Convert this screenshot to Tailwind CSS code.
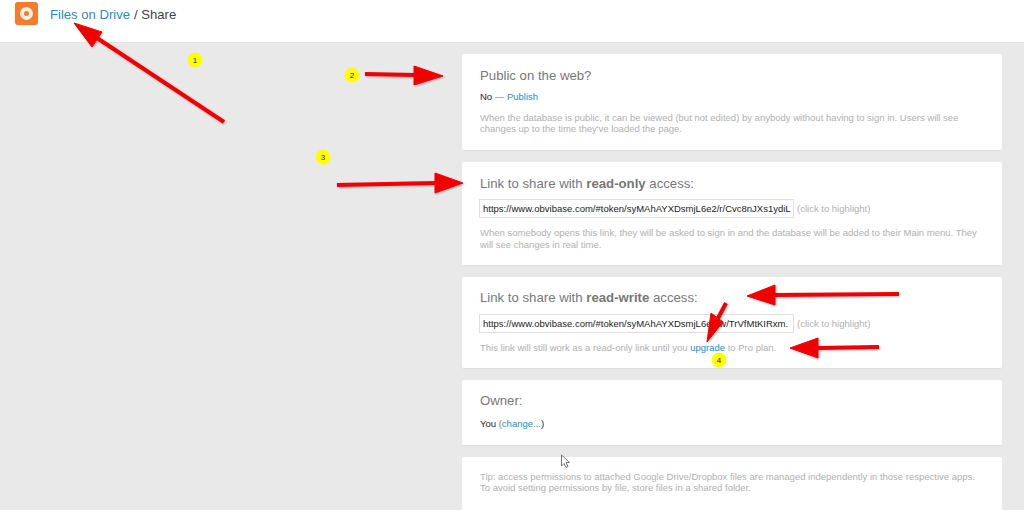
<!DOCTYPE html>
<html lang="en">

<head>
  <meta charset="UTF-8">
  <meta name="viewport" content="width=device-width, initial-scale=1.0">
  <title>Share</title>
  <script src="https://cdn.jsdelivr.net/npm/@tailwindcss/browser@4"></script>
</head>

<body class="bg-[#e9e9e9] font-['Liberation_Sans',Arial,sans-serif] text-[9.5px] leading-[11.5px] text-[#222]">
  <div class="relative h-[510px] w-[1024px] overflow-hidden">
    <!-- Header -->
    <header class="flex h-[43px] items-start border-b border-[#e2e2e2] bg-white pl-[15px] pt-[2px] text-[13.1px]">
      <div class="flex h-[23px] w-[23px] items-center justify-center rounded-[3px] bg-[#f47b2b]">
        <div class="h-[13px] w-[13px] rounded-full border-[4px] border-[#fdeee3]"></div>
      </div>
      <a class="ml-[12px] mt-[7px] text-[#2a8bc0]">Files on Drive</a>
      <span class="ml-[4px] mt-[7px] text-[#444]">/ Share</span>
    </header>

    <!-- Cards -->
    <main class="ml-[462px] mt-[11px] flex w-[540px] flex-col gap-[11px]">
      <section class="h-[97px] rounded-[2px] border-b border-[#ddd] bg-white px-[18px] pt-[14px]">
        <h2 class="text-[13.2px] leading-[16px] text-[#777]">Public on the web?</h2>
        <p class="mt-[7px]">No <span class="text-[#777]">—</span> <a class="text-[#2a8bc0]">Publish</a></p>
        <p class="mt-[9px] leading-[11px] text-[#b0b0b0]">When the database is public, it can be viewed (but not edited) by anybody without having to sign in. Users will see changes up to the time they've loaded the page.</p>
      </section>

      <section class="h-[104px] rounded-[2px] border-b border-[#ddd] bg-white px-[18px] pt-[14px]">
        <h2 class="text-[13.2px] leading-[16px] text-[#777]">Link to share with <b>read-only</b> access:</h2>
        <div class="mt-[7px] flex items-center">
          <div class="-ml-[1px] h-[19px] w-[315px] overflow-hidden whitespace-nowrap border border-[#e0e0e0] px-[3px] leading-[17px]">https://www.obvibase.com/#token/syMAhAYXDsmjL6e2/r/Cvc8nJXs1ydiL</div>
          <span class="ml-[3px] text-[#b0b0b0]">(click to highlight)</span>
        </div>
        <p class="mt-[9px] text-[#b0b0b0]">When somebody opens this link, they will be asked to sign in and the database will be added to their Main menu. They will see changes in real time.</p>
      </section>

      <section class="h-[92px] rounded-[2px] border-b border-[#ddd] bg-white px-[18px] pt-[13px]">
        <h2 class="text-[13.2px] leading-[16px] text-[#777]">Link to share with <b>read-write</b> access:</h2>
        <div class="mt-[8px] flex items-center">
          <div class="-ml-[1px] h-[19px] w-[315px] overflow-hidden whitespace-nowrap border border-[#e0e0e0] px-[3px] leading-[17px]">https://www.obvibase.com/#token/syMAhAYXDsmjL6e2/w/TrVfMtKIRxm.</div>
          <span class="ml-[3px] text-[#b0b0b0]">(click to highlight)</span>
        </div>
        <p class="mt-[9px] text-[#b0b0b0]">This link will still work as a read-only link until you <a class="text-[#2a8bc0]">upgrade</a> to Pro plan.</p>
      </section>

      <section class="h-[66px] rounded-[2px] border-b border-[#ddd] bg-white px-[18px] pt-[13px]">
        <h2 class="text-[13.2px] leading-[16px] text-[#777]">Owner:</h2>
        <p class="mt-[9px]">You <span class="text-[#777]">(</span><a class="text-[#2a8bc0]">change...</a>)</p>
      </section>

      <section class="h-[54px] rounded-[2px] border-b border-[#ddd] bg-white px-[18px] pt-[14px] leading-[11px] text-[#b0b0b0]">
        <p>Tip: access permissions to attached Google Drive/Dropbox files are managed independently in those respective apps.<br>To avoid setting permissions by file, store files in a shared folder.</p>
      </section>
    </main>

    <!-- Annotations drawn over the screenshot -->
    <svg class="absolute left-0 top-0" width="1024" height="510" viewBox="0 0 1024 510">
      <g class="drop-shadow-[1px_1px_1px_rgba(0,0,0,0.25)]" fill="#f00000" stroke="#f00000" stroke-linejoin="round">
        <path d="M224 122 L97 38" stroke-width="4" fill="none" />
        <path d="M74 23 L102 32 L92 47 Z" />
        <path d="M365 74 L415 75" stroke-width="4" fill="none" />
        <path d="M443 76 L414 66 L414 85 Z" />
        <path d="M337 185 L436 183" stroke-width="4" fill="none" />
        <path d="M463 183 L435 173 L435 193 Z" />
        <path d="M899 294 L775 295" stroke-width="4" fill="none" />
        <path d="M747 296 L775 285 L775 305 Z" />
        <path d="M879 347 L818 348" stroke-width="4" fill="none" />
        <path d="M790 348 L818 338 L818 358 Z" />
        <path d="M726 303 L716 322" stroke-width="4" fill="none" />
        <path d="M707 342 L711 313 L723 322 Z" />
      </g>
      <g fill="#ffff00">
        <circle cx="195" cy="60" r="7.5" />
        <circle cx="352" cy="75" r="7.5" />
        <circle cx="323" cy="157" r="7.5" />
        <circle cx="719" cy="360" r="7.5" />
      </g>
      <g fill="#222" font-family="Liberation Sans" font-size="8" text-anchor="middle">
        <text x="195" y="63">1</text>
        <text x="352" y="78">2</text>
        <text x="323" y="160">3</text>
        <text x="719" y="363">4</text>
      </g>
      <path d="M561.5 455 L561.5 466 L564 463.5 L566 467.5 L568 466.5 L566 462.5 L569.5 462.5 Z" fill="#fff" stroke="#555" stroke-width="0.8" />
    </svg>
  </div>
</body>

</html>
